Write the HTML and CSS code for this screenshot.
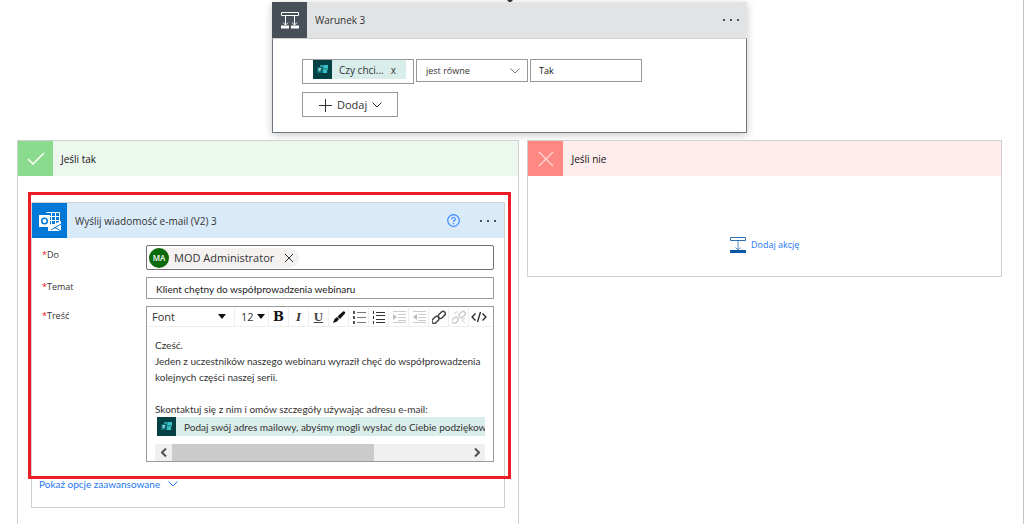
FILE: index.html
```html
<!DOCTYPE html>
<html lang="pl">
<head>
<meta charset="utf-8">
<meta name="viewport" content="width=device-width, initial-scale=1">
<title>Warunek 3</title>
<link rel="stylesheet" href="styles.css">
</head>
<body>
<svg width="0" height="0" class="defs" aria-hidden="true">
  <symbol id="forms" viewBox="0 0 19 19">
    <path fill="#034144" d="M0 0h19v19H0z"/>
    <path fill="#2b9a9c" d="M7 5h8v5H7z"/>
    <path fill="#37c2c8" d="M11 5h4v3h-4zM10 10h4v3h-4z"/>
    <path fill="#0b6a70" d="M4 7h6v6H4z"/>
    <path fill="none" stroke="#b5e8e8" d="M6 11.500V8.500h2M6 10h2"/>
  </symbol>
  <symbol id="chevron" viewBox="0 0 10 6">
    <path fill="none" stroke="currentColor" d="M.5.5 5 5 9.500.5"/>
  </symbol>
  <symbol id="caret" viewBox="0 0 8 5"><path fill="currentColor" d="M0 0h8L4 5z"/></symbol>
  <symbol id="cross" viewBox="0 0 10 10">
    <path fill="none" stroke="currentColor" d="m1 1 8 8M9 1 1 9"/>
  </symbol>
</svg>
<main class="page">
  <svg class="arrow-tip" viewBox="0 0 6 2" aria-hidden="true"><path fill="#333" d="M0 0h6L4 2H2z"/></svg>

  <section class="condition">
    <header class="bar bar-condition">
      <span class="bar-icon icon-condition">
        <svg width="20" height="20" viewBox="0 0 20 20" fill="none" stroke="#fff"><path d="M1.500 2.500h17v3h-17zM5.500 6v9M14.500 6v9M3 12.500 5.500 15 8 12.500M12 12.500l2.500 2.500 2.500-2.500"/><path stroke-width="3" d="M1 17h8M11 17h8"/></svg>
      </span>
      <h2 class="bar-title">Warunek 3</h2>
      <button class="more" type="button" aria-label="Menu warunku"><i></i><i></i><i></i></button>
    </header>
    <div class="condition-body">
      <div class="rule">
        <div class="operand">
          <span class="token token-short">
            <svg class="token-icon"><use href="#forms"/></svg>
            <span>Czy chci...</span>
            <button class="token-remove" type="button" aria-label="Usuń">x</button>
          </span>
        </div>
        <div class="operator">
          <select aria-label="Operator"><option>jest równe</option></select>
          <svg class="chevron"><use href="#chevron"/></svg>
        </div>
        <input class="value" type="text" value="Tak" aria-label="Wartość">
      </div>
      <button class="add" type="button">
        <svg width="14" height="14" viewBox="0 0 14 14" fill="none" stroke="currentColor"><path d="M7.500 1v13M1 7.500h13"/></svg>
        <span>Dodaj</span>
        <svg class="chevron"><use href="#chevron"/></svg>
      </button>
    </div>
  </section>

  <div class="branches">
    <section class="branch branch-yes">
      <header class="bar bar-yes">
        <span class="bar-icon icon-yes"><svg width="18" height="14" viewBox="0 0 18 14" fill="none" stroke="#fff" stroke-width="1.500"><path d="m1 7 5 5L17 1"/></svg></span>
        <h2 class="bar-title">Jeśli tak</h2>
      </header>
      <article class="action">
        <header class="bar bar-action">
          <span class="bar-icon icon-outlook">
            <svg width="22" height="22" viewBox="0 0 22 22"><path fill="none" stroke="#fff" d="M7.500 2.500h13v12M12.500 2.500v12M16.500 2.500v12M8 6.500h12.500M8 10.500h12.500"/><path fill="#fff" d="M12 14h3l7-3v10H9v-5zM0 5h11v12H0z"/><circle cx="5.500" cy="11" r="2.800" fill="none" stroke="#0078d7" stroke-width="1.500"/><path fill="none" stroke="#0078d7" d="m12 20 10-6M15 17l7 4"/></svg>
          </span>
          <h3 class="bar-title">Wyślij wiadomość e-mail (V2) 3</h3>
          <button class="help" type="button" aria-label="Pomoc">
            <svg width="13" height="13" viewBox="0 0 13 13" fill="none" stroke="currentColor" stroke-width="1.200"><circle cx="6.500" cy="6.500" r="5.800"/><path d="M4.700 5.200c0-2.300 3.600-2.300 3.600 0 0 1.300-1.800 1.300-1.800 2.800M6.500 9v1.200"/></svg>
          </button>
          <button class="more" type="button" aria-label="Menu akcji"><i></i><i></i><i></i></button>
        </header>
        <div class="fields">
          <label class="label" for="to"><b>*</b>Do</label>
          <div class="people">
            <span class="person">
              <span class="avatar">MA</span>
              <span>MOD Administrator</span>
              <button class="person-remove" type="button" aria-label="Usuń"><svg width="10" height="10"><use href="#cross"/></svg></button>
            </span>
            <input id="to" type="text">
          </div>

          <label class="label" for="subject"><b>*</b>Temat</label>
          <input class="subject" id="subject" type="text" value="Klient chętny do współprowadzenia webinaru">

          <span class="label" id="body-label"><b>*</b>Treść</span>
          <div class="editor">
            <div class="toolbar">
              <span class="pick pick-font"><select aria-label="Czcionka"><option>Font</option></select><svg class="caret"><use href="#caret"/></svg></span>
              <span class="pick pick-size"><select aria-label="Rozmiar"><option>12</option></select><svg class="caret"><use href="#caret"/></svg></span>
              <button class="tool tool-bold" type="button" aria-label="Pogrubienie">B</button>
              <button class="tool tool-italic" type="button" aria-label="Kursywa">I</button>
              <button class="tool tool-underline" type="button" aria-label="Podkreślenie">U</button>
              <button class="tool" type="button" aria-label="Kolor"><svg viewBox="0 0 14 14"><path fill="#111" d="m1 13 1.500-4L5 7l2 2-2 2.500zM5.500 6.500 11 1.500c1-1 3 1 2 2L8 9z"/></svg></button>
              <button class="tool" type="button" aria-label="Lista punktowana"><svg viewBox="0 0 14 14"><path fill="none" stroke="#777" d="M5 2.500h9M5 7.500h9M5 12.500h9"/><path fill="#555" d="M1 1h2v3H1zM1 6h2v3H1zM1 11h2v3H1z"/></svg></button>
              <button class="tool" type="button" aria-label="Lista numerowana"><svg viewBox="0 0 14 14"><path fill="none" stroke="#333" d="M4 2.500h9M4 5.500h9M4 9.500h9M4 12.500h9M1.500 1v3M1.500 6v3M1.500 11v3"/></svg></button>
              <button class="tool" type="button" aria-label="Zwiększ wcięcie"><svg viewBox="0 0 14 14"><path fill="none" stroke="#ccc" d="M1 1.500h13M6 4.500h8M6 7.500h8M6 10.500h8M1 12.500h13"/><path fill="#bbb" d="m1 4 4 3-4 3z"/></svg></button>
              <button class="tool" type="button" aria-label="Zmniejsz wcięcie"><svg viewBox="0 0 14 14"><path fill="none" stroke="#ccc" d="M1 1.500h13M6 4.500h8M6 7.500h8M6 10.500h8M1 12.500h13"/><path fill="#bbb" d="M5 4 1 7l4 3z"/></svg></button>
              <button class="tool" type="button" aria-label="Wstaw link"><svg viewBox="0 0 14 14"><g fill="none" stroke="#444" stroke-width="1.500"><rect x="-1" y="7" width="8" height="4.500" rx="2.200" transform="rotate(-45 4 9)"/><rect x="6" y="2.500" width="8" height="4.500" rx="2.200" transform="rotate(-45 10 5)"/></g></svg></button>
              <button class="tool" type="button" aria-label="Usuń link"><svg viewBox="0 0 14 14"><g fill="none" stroke="#ccc" stroke-width="1.500"><rect x="-1" y="7" width="7" height="4.500" rx="2.200" transform="rotate(-45 4 9)"/><rect x="7" y="2.500" width="7" height="4.500" rx="2.200" transform="rotate(-45 10 5)"/><path d="m2 2 2 2M10 10l3 3M10 9h3M5 1v2" stroke-width="1"/></g></svg></button>
              <button class="tool" type="button" aria-label="Kod HTML"><svg class="wide" viewBox="0 0 16 14"><path fill="none" stroke="#222" stroke-width="1.300" d="M4.500 3.500 1 7l3.500 3.500M11.500 3.500 15 7l-3.500 3.500M9.500 2l-3 10"/></svg></button>
            </div>
            <div class="message" role="textbox" aria-labelledby="body-label" contenteditable="true">
              <p>Cześć.</p>
              <p>Jeden z uczestników naszego webinaru wyraził chęć do współprowadzenia kolejnych części naszej serii.</p>
              <p><br></p>
              <p>Skontaktuj się z nim i omów szczegóły używając adresu e-mail:</p>
              <span class="token token-long"><svg class="token-icon"><use href="#forms"/></svg><span>Podaj swój adres mailowy, abyśmy mogli wysłać do Ciebie podziękow</span></span>
            </div>
            <div class="scrollbar">
              <button type="button" aria-label="W lewo"><svg width="6" height="9" viewBox="0 0 6 9"><path d="M5 .5 1 4.500l4 4"/></svg></button>
              <span class="track"><span class="thumb"></span></span>
              <button type="button" aria-label="W prawo"><svg width="6" height="9" viewBox="0 0 6 9"><path d="m1 .5 4 4-4 4"/></svg></button>
            </div>
          </div>
        </div>
        <a class="advanced" href="#">Pokaż opcje zaawansowane <svg class="chevron"><use href="#chevron"/></svg></a>
        <div class="highlight"></div>
      </article>
    </section>

    <section class="branch branch-no">
      <header class="bar bar-no">
        <span class="bar-icon icon-no"><svg width="16" height="16" viewBox="0 0 16 16" fill="none" stroke="#ffd5d3" stroke-width="1.300"><path d="m1 1 14 14M15 1 1 15"/></svg></span>
        <h2 class="bar-title">Jeśli nie</h2>
      </header>
      <a class="add-action" href="#">
        <svg width="16" height="16" viewBox="0 0 16 16"><path fill="#fff" stroke="#2f6fb3" d="M.5.500h15v3H.5z"/><path fill="none" stroke="#5b8fc6" d="M8 4v9M5.500 10.500 8 13l2.500-2.500"/><path fill="#0a57a8" d="M0 13h16v3H0z"/></svg>
        Dodaj akcję
      </a>
    </section>
  </div>
</main>
</body>
</html>
```
FILE: styles.css
```css
* { box-sizing: border-box; }

body {
  margin: 0;
  background: #fff;
  color: #333;
  font: 10px/16px "Open Sans", "Noto Sans", sans-serif;
}

h2, h3, p { margin: 0; font: inherit; }

button, input, select {
  margin: 0;
  padding: 0;
  border: 0;
  border-radius: 0;
  background: none;
  color: inherit;
  font: inherit;
}

select { appearance: none; }
svg { display: block; flex: none; }
a { text-decoration: none; }
.defs { position: absolute; }

.page {
  position: relative;
  height: 100vh;
  overflow: hidden;
  padding: 2px 21px 0 17px;
  border-right: 1px solid #c4c4c4;
}

.arrow-tip {
  position: absolute;
  top: 0;
  left: calc(50% - 5px);
  width: 6px;
  height: 2px;
}

/* Header bars shared by every card */
.bar { display: flex; align-items: center; height: 35px; }
.bar-icon {
  display: grid;
  place-items: center;
  flex: none;
  width: 35px;
  height: 100%;
}
.bar-title { flex: 1; padding-left: 8px; }

.more { display: flex; gap: 5px; padding: 6px 8px; }
.more i { width: 2px; height: 2px; border-radius: 1px; background: #222; }

.chevron { width: 10px; height: 6px; }
.caret { width: 8px; height: 5px; }

/* Condition */
.condition {
  max-width: 475px;
  margin: 0 auto 7px;
  box-shadow: 0 2px 8px rgba(0, 0, 0, .22);
}
.bar-condition { height: 36px; background: #e2e3e5; }
.icon-condition { background: #484f58; }
.condition-body {
  padding: 20px 29px 15px;
  border: 1px solid #6f7780;
  border-top-color: #d0d0d0;
  background: #fff;
}
.rule { display: flex; align-items: flex-start; gap: 2px; margin-bottom: 8px; }
.operand, .operator, .value { width: 112px; height: 23px; border: 1px solid #999; }
.operand { height: 25px; padding-left: 10px; }
.operator { display: grid; align-items: center; }
.operator > * { grid-area: 1 / 1; }
.operator select { padding-left: 9px; font-size: 9px; }
.operator .chevron { justify-self: end; margin-right: 7px; color: #777; pointer-events: none; }
.value { padding: 0 8px; color: #111; font-size: 9px; }

.token { display: flex; align-items: center; height: 19px; background: #d9edea; }
.token-icon { width: 19px; height: 19px; }
.token-short { width: 93px; gap: 7px; }
.token-remove { line-height: 12px; }

.add {
  display: flex;
  align-items: center;
  gap: 5px;
  height: 25px;
  padding: 0 15px;
  border: 1px solid #999;
  font-size: 11px;
}

/* Branches */
.branches { display: grid; grid-template-columns: 18fr 17fr; align-items: start; gap: 8px; }
.branch { min-width: 0; border: 1px solid #d0d0d0; }
.branch-yes { padding-bottom: 48px; }
.bar-yes { background: #ecf7ee; color: #111; }
.icon-yes { background: #8adb8e; }
.bar-no { background: #ffecec; color: #111; }
.icon-no { background: #ff8982; }

.add-action {
  display: flex;
  align-items: center;
  justify-content: center;
  gap: 5px;
  padding: 61px 0 23px;
  color: #2477f2;
  font-size: 9px;
}

/* Email action */
.action { position: relative; margin: 26px 13px 0; border: 1px solid #d0d0d0; }
.bar-action { background: #d9eaf8; }
.icon-outlook { background: #0078d7; }
.help { color: #3b8cff; }
.bar-action .more { margin-left: 12px; }

.highlight {
  position: absolute;
  inset: -11px -7px 28px -4px;
  border: 3px solid #ee1c25;
  pointer-events: none;
}

.fields {
  display: grid;
  grid-template-columns: 97px minmax(0, 1fr);
  column-gap: 7px;
  row-gap: 7px;
  padding: 7px 10px 0 10px;
}
.label { padding-top: 2px; font-size: 9px; }
.label b { color: #e81123; font-weight: 400; }

.people {
  display: flex;
  align-items: center;
  height: 25px;
  padding: 0 2px;
  border: 1px solid #707070;
  border-radius: 2px;
}
.people input { flex: 1; min-width: 0; outline: 0; }
.person {
  display: flex;
  align-items: center;
  gap: 5px;
  height: 20px;
  padding-right: 5px;
  border-radius: 10px;
  background: #f3f2f1;
  font-size: 11px;
}
.avatar {
  display: grid;
  place-items: center;
  width: 20px;
  height: 20px;
  border-radius: 50%;
  background: #0b6a0b;
  color: #fff;
  font-size: 8px;
  font-weight: 600;
}
.person-remove { padding-left: 5px; }

.subject, .message, .advanced { font-family: Lato, "Open Sans", sans-serif; }

.subject {
  height: 22px;
  padding: 2px 9px 0;
  border: 1px solid #999;
  color: #222;
}

.editor { border: 1px solid #999; }
.toolbar {
  display: flex;
  align-items: center;
  height: 20px;
  border-bottom: 1px solid #eee;
}
.pick {
  display: grid;
  align-items: center;
  height: 18px;
  border-right: 1px solid #eee;
  font-size: 11px;
}
.pick > * { grid-area: 1 / 1; }
.pick .caret { justify-self: end; color: #111; pointer-events: none; }
.pick-font { width: 88px; padding: 0 8px 0 5px; }
.pick-size { width: 34px; padding: 0 3px 0 6px; }
.tool {
  display: grid;
  place-items: center;
  width: 20px;
  height: 18px;
  border-right: 1px solid #eee;
  font-size: 13px;
  line-height: 18px;
}
.tool:last-child { border-right: 0; }
.tool svg { width: 14px; height: 14px; }
.tool svg.wide { width: 16px; }
.tool-bold { color: #111; font-family: "DejaVu Serif", serif; font-weight: 700; }
.tool-italic { color: #333; font-family: "Liberation Serif", serif; font-style: italic; font-weight: 700; }
.tool-underline { color: #444; font-family: "Liberation Serif", serif; font-weight: 700; text-decoration: underline; }

.message {
  margin: 10px 8px 0 8px;
  overflow: hidden;
  outline: 0;
}
.token-long { gap: 8px; margin-left: 2px; white-space: nowrap; overflow: hidden; }

.scrollbar { display: flex; height: 17px; margin: 8px 8px 0; background: #f0f0f0; }
.scrollbar button { display: grid; place-items: center; width: 17px; }
.scrollbar path { fill: none; stroke: #505050; stroke-width: 2; }
.track { flex: 1; }
.thumb { display: block; width: 68%; height: 100%; background: #cbcbcb; }

.advanced {
  display: flex;
  align-items: center;
  gap: 8px;
  padding: 14px 7px 15px;
  color: #2477f2;
}
```
